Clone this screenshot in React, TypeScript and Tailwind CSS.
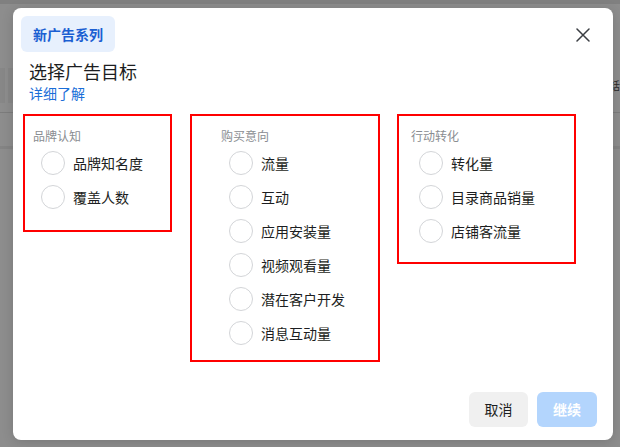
const GROUPS = [
  {
    title: '品牌认知',
    box: 'w-[149px] h-[118px] pl-[8px]',
    items: ['品牌知名度', '覆盖人数'],
  },
  {
    title: '购买意向',
    box: 'w-[190px] h-[248px] pl-[29px] ml-[18px]',
    items: ['流量', '互动', '应用安装量', '视频观看量', '潜在客户开发', '消息互动量'],
  },
  {
    title: '行动转化',
    box: 'w-[179px] h-[150px] pl-[12px] ml-[17px]',
    items: ['转化量', '目录商品销量', '店铺客流量'],
  },
]

function Radio({ label }: { label: string }) {
  return (
    <label className="flex items-center gap-[8px] h-[24px] cursor-pointer">
      <span className="w-[24px] h-[24px] rounded-full border border-[#d3d5d8] bg-white shrink-0" />
      <span className="text-[14px] leading-[20px] text-[#1c1e21]">{label}</span>
    </label>
  )
}

export default function App() {
  return (
    <div
      className="relative w-[620px] h-[447px] overflow-hidden bg-[#8d8d8d]"
      style={{ fontFamily: '"Noto Sans CJK SC", "Noto Sans", sans-serif' }}
    >
      {/* dimmed page behind the dialog */}
      <div className="flex flex-col">
        <div className="h-[4px] bg-[#808080]" />
        <div className="h-[64px]" />
        <div className="flex justify-between h-[35px]">
          <div className="flex gap-[3px]">
            <div className="w-[5px] bg-[#878787]" />
            <div className="w-[5px] bg-[#878787]" />
          </div>
          <div className="w-[7px] flex items-center text-[11px] text-[#2a2a2a] overflow-hidden leading-none">
            <span className="-ml-[4px]">話</span>
          </div>
        </div>
        <div className="h-[9px]" />
        <div className="h-px bg-[#7c7c7c]" />
        <div className="h-[33px]" />
        <div className="h-[3px] bg-[#848484]" />
      </div>

      {/* dialog */}
      <div className="absolute left-[13px] top-[8px] w-[600px] h-[432px] rounded-[8px] bg-white flex flex-col p-[8px] shadow-[0_2px_12px_rgba(0,0,0,0.15)]">
        <div className="flex items-start justify-between">
          <div className="h-[36px] px-[12px] rounded-[6px] bg-[#e7f0fd] flex items-center text-[14px] font-bold text-[#1b5fd2]">
            新广告系列
          </div>
          <button className="mt-[11px] mr-[14px] w-[16px] h-[16px] flex items-center justify-center text-[#3a3d42]">
            <svg width="14" height="14" viewBox="0 0 14 14" fill="none" stroke="currentColor" strokeWidth="1.5" strokeLinecap="round">
              <path d="M1 1L13 13M13 1L1 13" />
            </svg>
          </button>
        </div>

        <h2 className="mt-[7px] ml-[8px] text-[18px] leading-[24px] font-normal text-[#1c1e21]">选择广告目标</h2>
        <a className="ml-[8px] text-[14px] leading-[20px] text-[#1a6ed8] w-fit cursor-pointer">详细了解</a>

        <div className="mt-[11px] ml-[2px] flex items-start">
          {GROUPS.map((g) => (
            <div key={g.title} className={`border-2 border-[#ff0000] pt-[12px] ${g.box}`}>
              <div className="text-[12px] leading-[16px] text-[#8a8d91]">{g.title}</div>
              <div className="mt-[7px] pl-[8px] flex flex-col gap-[10px]">
                {g.items.map((it) => (
                  <Radio key={it} label={it} />
                ))}
              </div>
            </div>
          ))}
        </div>

        <div className="mt-auto flex justify-end gap-[9px] pr-[8px] pb-[5px]">
          <button className="w-[59px] h-[35px] rounded-[6px] bg-[#f0f0f0] text-[14px] text-[#1c1e21]">取消</button>
          <button className="w-[60px] h-[35px] rounded-[6px] bg-[#b3d5fd] text-[14px] font-bold text-white">继续</button>
        </div>
      </div>
    </div>
  )
}
